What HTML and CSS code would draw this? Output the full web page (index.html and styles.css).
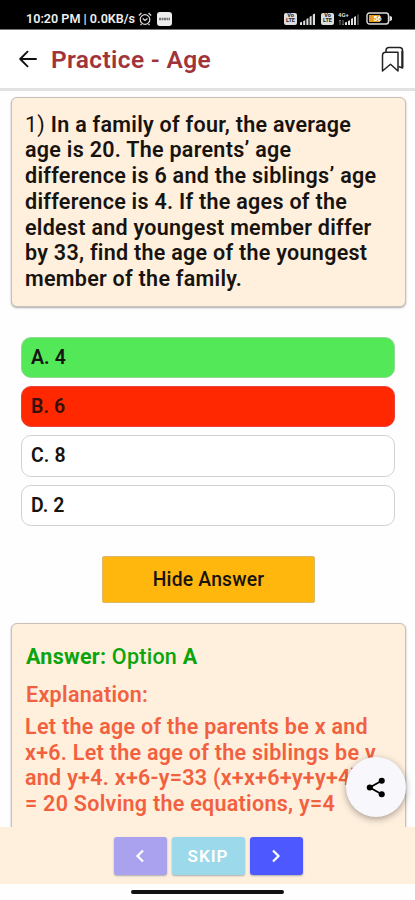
FILE: index.html
```html
<!DOCTYPE html>
<html lang="en">
<head>
<meta charset="utf-8">
<meta name="viewport" content="width=device-width, initial-scale=1">
<title>Practice - Age</title>
<link rel="stylesheet" href="styles.css">
</head>
<body>
<div class="screen">
  <div class="status">
    <span class="clock">10:20 PM | 0.0KB/s</span>
    <svg class="alarm" width="14" height="14" viewBox="0 0 14 14" fill="none" stroke="#ddd" stroke-width="1.2"><circle cx="7" cy="7.5" r="4.8"/><path d="M.8 3.5 3.5 1M13.2 3.5 10.500 1M4.700 6.500 7 8.500 9.500 6.500M3.500 12 2.500 13.200M10.500 12l1 1.200"/></svg>
    <svg class="notice" width="15" height="14" viewBox="0 0 15 14"><rect width="15" height="14" rx="3" fill="#eee"/><path d="M2 7h11" stroke="#777" stroke-width="2.400" stroke-dasharray="2 .5"/></svg>
    <div class="signals">
      <span class="volte">Vo<br>LTE</span>
      <svg width="16" height="12" viewBox="0 0 16 12" fill="#ddd"><path d="M0 12V9.500l2-.8V12zM3.200 12V8l2-.8V12zM6.400 12V6l2-.9V12zM9.600 12V3.700l2-1V12zM12.800 12V1.500l2.200-1V12z"/></svg>
      <span class="volte second">Vo<br>LTE</span>
      <svg class="bars" width="22" height="14" viewBox="0 0 22 14"><path fill="#ddd" d="M7 13v-2.500l2-.8V13zM10 13V9l2-.8V13zM13 13V7l2-.9V13zM16 13V5l2-1v9z"/><path fill="#444" d="M19 13V3l2-1v11z"/><path d="M2 8v5M1 9.200 2 8l1 1.200M5 8v5M4 11.800 5 13l1-1.200" stroke="#777" fill="none"/><text x="0" y="5.300" class="net">4G+</text></svg>
      <svg class="battery" width="27" height="13" viewBox="0 0 27 13"><rect x="1" y="1" width="21.500" height="11" rx="2.500" fill="none" stroke="#ddd" stroke-width="1.400"/><path d="M23.500 3.500 26 5v3l-2.500 1.500z" fill="#ddd"/><rect x="3" y="3" width="11" height="7" fill="#e59a20"/><text x="7.500" y="9" class="charge">56</text></svg>
    </div>
  </div>
  <header>
    <svg class="back" width="18" height="18" viewBox="0 0 18 18" fill="none" stroke="#111" stroke-width="1.900" stroke-linecap="round" stroke-linejoin="round"><path d="M17 9H1.500M8.500 1.700 1.200 9l7.300 7.300"/></svg>
    <h1>Practice - Age</h1>
    <svg class="bookmark" width="23" height="27" viewBox="0 0 23 27" fill="none" stroke="#222" stroke-width="1.500" stroke-linejoin="round"><path d="M1.500 9.500q0-3.300 3.300-3.300H17V25l-7.500-6.700-8 6.700z"/><path d="M5 6V4.500Q5 1.500 8 1.500h10.500Q21.500 1.500 21.500 4.500V22L17.500 20.500"/><path d="M21.300 5v16.500" stroke-width="2"/></svg>
  </header>
  <main>
    <section class="card question">
      <p><span class="num">1)</span> In a family of four, the average<br>age is 20. The parents’ age<br>difference is 6 and the siblings’ age<br>difference is 4. If the ages of the<br>eldest and youngest member differ<br>by 33, find the age of the youngest<br>member of the family.</p>
    </section>
    <div class="options">
      <div class="option right">A. 4</div>
      <div class="option wrong">B. 6</div>
      <div class="option">C. 8</div>
      <div class="option">D. 2</div>
    </div>
    <button class="toggle">Hide Answer</button>
    <section class="card answer">
      <h2><b>Answer:</b> Option <b>A</b></h2>
      <h3>Explanation:</h3>
      <p>Let the age of the parents be x and<br>x+6. Let the age of the siblings be y<br>and y+4. x+6-y=33 (x+x+6+y+y+4)/4<br>= 20 Solving the equations, y=4</p>
    </section>
    <div class="share"><svg width="20" height="21" viewBox="0 0 20 22"><path d="M16 4 3.500 11 16 18" fill="none" stroke="#000" stroke-width="1.900"/><circle cx="16" cy="4" r="3.200"/><circle cx="3.500" cy="11" r="3.200"/><circle cx="16" cy="18" r="3.200"/></svg></div>
  </main>
  <nav>
    <button class="prev"><svg width="10" height="14" viewBox="0 0 10 14"><path d="M8 1.500 2.500 7 8 12.500"/></svg></button>
    <button class="skip">SKIP</button>
    <button class="next"><svg width="10" height="14" viewBox="0 0 10 14"><path d="M2 1.500 7.500 7 2 12.500"/></svg></button>
  </nav>
  <div class="home"><span></span></div>
</div>
</body>
</html>
```
FILE: styles.css
```css
* { box-sizing: border-box; }
body { margin: 0; background: #fefefe; font-family: Roboto, sans-serif; color: #17130f; }
h1, h2, h3, p { margin: 0; }
button { border: 0; padding: 0; font-family: inherit; }
svg { display: block; flex: none; }
.screen { width: 415px; height: 900px; display: flex; flex-direction: column; overflow: hidden; }
.status { height: 30px; flex: none; background: #000; color: #eee; display: flex; align-items: center; padding: 8px 22px 0 26px; border-bottom: 1px solid #777; }
.clock { font-size: 12.6px; font-weight: 600; width: 110px; white-space: nowrap; }
.alarm { margin-left: 2px; }
.notice { margin-left: 5px; }
.signals { margin-left: auto; display: flex; align-items: center; }
.volte { width: 13px; height: 12px; margin-right: 3px; border-radius: 2px; background: #ddd; color: #222; font-size: 5.5px; line-height: 5.5px; font-weight: 700; text-align: center; }
.second { margin: 0 4px 0 5px; }
.bars { margin-right: 6px; }
.net { font-size: 6px; font-weight: 700; fill: #ddd; }
.charge { font-size: 7px; font-weight: 700; fill: #fff; }
header { height: 61px; flex: none; background: #fff; border-bottom: 3px solid #e2e2e2; display: flex; align-items: center; padding: 0 11px 0 19px; }
h1 { margin-left: 14px; padding-top: 1px; font-size: 24.5px; line-height: 30px; letter-spacing: .35px; font-weight: 600; color: #a0343a; white-space: nowrap; }
.bookmark { margin-left: auto; }
main { height: 736px; flex: none; padding: 6px 9px 0 11px; position: relative; overflow: hidden; }
.card { background: #ffefdd; border: 1px solid #c9c1b7; border-radius: 6px; box-shadow: 0 1px 2px #aaa; white-space: nowrap; }
.question { height: 210px; padding: 13.5px 13px; }
.card p { font-size: 21.5px; line-height: 25.75px; letter-spacing: .28px; font-weight: 600; }
.num { font-weight: 400; }
.options { margin: 30px 11px 0 10px; display: grid; gap: 8px; }
.option { height: 41.2px; border: 1px solid #d2d2d2; border-radius: 10px; padding-left: 9px; background: #fff; font-size: 19.5px; line-height: 40.5px; letter-spacing: .1px; font-weight: 600; }
.right { background: #53e858; border-color: #8fd993; }
.wrong { background: #ff2800; border-color: #e8433a; color: #35100a; }
.toggle { display: block; width: 213px; height: 47px; margin: 30px 0 0 91px; background: #ffb60d; border: 1px solid #dcb96a; border-radius: 2px; font-size: 19.3px; letter-spacing: .2px; font-weight: 500; color: #17130f; }
.answer { height: 260px; margin-top: 20px; padding: 20px 13px 0 14px; }
h2 { font-size: 21.5px; line-height: 26px; letter-spacing: .25px; font-weight: 500; color: #0ba50b; }
h3 { margin-top: 12px; font-size: 21.5px; line-height: 26px; letter-spacing: .3px; font-weight: 600; color: #f2613f; }
.answer p { margin: 6px 0 0 -1px; color: #f2613f; }
.share { position: absolute; left: 346px; top: 666px; width: 60px; height: 60px; border-radius: 50%; background: #f7f7fc; box-shadow: 0 2px 7px rgba(0,0,0,.35); display: flex; align-items: center; justify-content: center; }
nav { height: 57px; flex: none; background: #ffefdd; display: flex; justify-content: center; gap: 5px; padding: 10px 0 0 1px; }
nav button { width: 53px; height: 38px; border-radius: 3px; color: #fff; display: flex; align-items: center; justify-content: center; box-shadow: 0 1px 2px #aaa; }
nav path { fill: none; stroke: #fff; stroke-width: 2.2; }
.prev { background: #aaa2ef; }
nav .skip { width: 73px; background: #9cd9eb; font-size: 17px; font-weight: 600; letter-spacing: 1px; }
.next { background: #4e58ff; }
.home { height: 16px; padding-top: 6px; }
.home span { display: block; width: 153px; height: 4px; margin-left: 131px; border-radius: 2px; background: #111; }
```
